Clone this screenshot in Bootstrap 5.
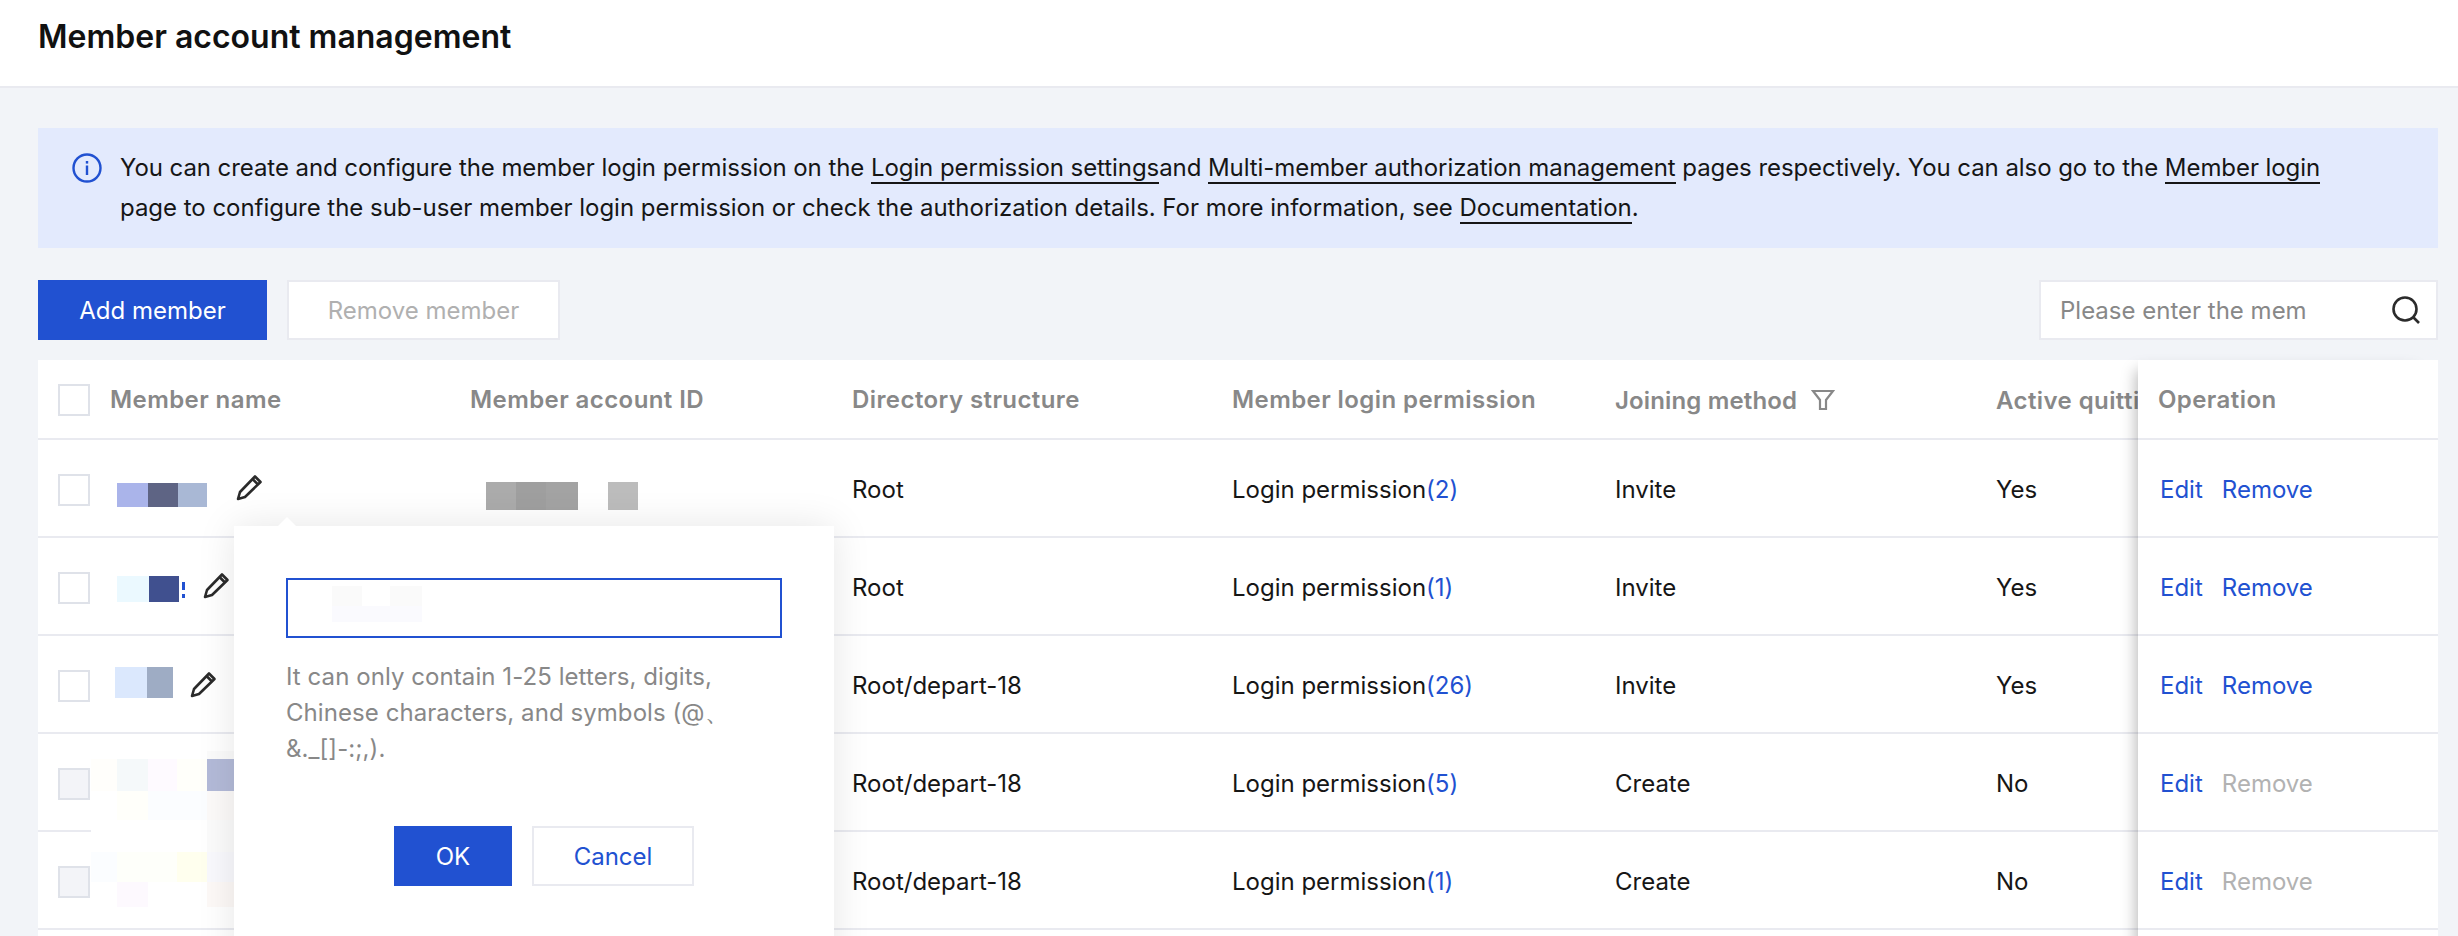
<!DOCTYPE html>
<html lang="en"><head><meta charset="utf-8"><title>Member account management</title>
<link href="https://cdn.jsdelivr.net/npm/bootstrap@5.3.0/dist/css/bootstrap.min.css" rel="stylesheet">
<style>
:root{--blue:#2151d1;--line:#e9eaf0;--grey:#888}
html,body{height:936px;overflow:hidden}
body{background:#f2f4f8;font-family:Inter,"Liberation Sans",sans-serif;font-size:24px;color:#161616}
.shell{position:relative;height:936px;overflow:hidden}
.topbar{height:88px;background:#fff;border-bottom:2px solid var(--line);padding:0 38px}
.topbar h1{font-size:32px;font-weight:600;margin:0;line-height:74px;color:#111}
.body-wrap{padding:40px 20px 0 38px}
.notice{background:#e3eafd;height:120px;padding:20px 34px;display:flex;gap:18px;line-height:40px;white-space:nowrap}
.notice svg{flex:none;width:30px;height:30px;margin-top:5px}
.notice a{color:inherit;text-decoration:none;border-bottom:2px solid #161616}
.line-a{letter-spacing:-.07px}.line-b{letter-spacing:-.03px}
.tools{height:60px;margin:32px 0 20px}
.btn-gap{gap:20px}
.sq-btn{border-radius:0;font-size:24px;height:60px;padding:2px 0 0;display:inline-flex;align-items:center;justify-content:center}
.sq-blue{background:var(--blue);border:0;color:#fff}
.sq-blue:hover{background:var(--blue);color:#fff}
.sq-off,.sq-off:disabled{background:#fff;border:2px solid var(--line);color:#b0b0b0;opacity:1}
.w-add{width:229px}.w-rm{width:273px}
.seek{width:399px;height:60px;background:#fff;border:2px solid var(--line);padding:0 15px 0 19px}
.seek input{width:246px;flex:none;border:0;padding:2px 0 0;outline:0;font:inherit;color:#161616;background:none}
.seek input::placeholder{color:var(--grey);opacity:1}
.seek svg{width:30px;height:30px}
.grid-wrap{background:#fff;display:flex}
.scroll-part{width:2100px;flex:none;overflow:hidden}
.fix-part{flex:1;position:relative;background:#fff;box-shadow:-12px 0 14px -10px rgba(0,0,0,.28)}
.mtb{table-layout:fixed;margin:0;--bs-table-bg:#fff;--bs-table-color:#161616;--bs-table-border-color:var(--line);border-collapse:separate;border-spacing:0}
.mtb.wide{width:2338px}
.mtb.slim{width:100%}
.mtb th,.mtb td{padding:0 20px;border-bottom:2px solid var(--line);vertical-align:middle;white-space:nowrap;overflow:hidden;box-shadow:none}
.mtb tr.th-row th{height:80px;font-weight:600;color:var(--grey);letter-spacing:.42px;padding-top:1px}
.mtb td{height:98px;padding-top:3px}
.c0{width:52px}.c1{width:360px}.c2{width:382px}.c3{width:380px}.c4{width:383px}.c5{width:381px}.c6{width:420px}
.mtb th.c0{padding:0 0 0 20px}
.mtb td.c0{padding:3px 0 0 20px}
.tick{width:32px;height:32px;border-radius:0!important;margin:0;border:2px solid #dfe2e9;display:block;background-color:#fff}
.tick:disabled{background-color:#f3f4f8;opacity:1}
.lnk{color:var(--blue);text-decoration:none}
.lnk-off{color:#b2b2b2}
.gap-op{margin-left:19px}
.mtb td.op-cell{padding-left:22px}
.name-cell{display:flex;align-items:center;height:90px}
.blur{display:flex;margin-left:7px;flex:none}
.blur i{display:block;height:100%}
.b1{height:24px;margin-top:10px}.b2{height:26px;margin-top:2px}.b3{height:31px;margin-top:-7px;margin-left:5px}
.b1 i:nth-child(1){width:31px;background:#aab4ea}.b1 i:nth-child(2){width:30px;background:#5e6484}.b1 i:nth-child(3){width:29px;background:#a9b8d5}
.b2 i:nth-child(1){width:32px;background:#ebf9ff}.b2 i:nth-child(2){width:30px;background:#40508f}
.b2 b{display:block;width:3px;height:16px;margin:6px 3px 0 3px;background:linear-gradient(var(--blue) 50%,transparent 50% 78%,var(--blue) 78%)}
.b3 i:nth-child(1){width:32px;background:#dbe8fd}.b3 i:nth-child(2){width:26px;background:#9eacc4}
.pen{width:27px;height:28px;flex:none;color:#2b2b2b}
.pen1{margin-left:29px;margin-top:-5px}.pen2{margin-left:15px;margin-top:-5px}.pen3{margin-left:17px;margin-top:-4px}
.id-blur{display:flex;height:28px;margin:12px 0 0 16px}
.id-blur i{display:block;width:30px}
.ib1{background:#ababab}.ib2{background:#9f9f9f}.ib3{background:#a3a3a3;width:32px!important}.ib4{background:#fff;}.ib5{background:#bcbcbc}
.smear{position:absolute;left:91px;top:751px;width:148px;height:156px;background:#fff;display:grid;grid-template-columns:26px 31px 29px 30px 32px;grid-template-rows:8px 32px 29px 32px 30px 25px;z-index:2}
.smear i:nth-child(n){display:block}
.s-a{background:#fffefb}.s-b{background:#f5f9fa}.s-c{background:#fefaff}.s-d{background:#fffffa}.s-e{background:#b3bad8}
.s-f{background:#fffffa}.s-g{background:#fbfdff}.s-h{background:#fcfaf9}.s-i{background:#fbfbfb}.s-j{background:#f9f9fd}.s-k{background:#fefffa}.s-l{background:#ffffee}.s-m{background:#fdf9fe}.s-n{background:#fdf9f7}
.pop-box{position:absolute;left:234px;top:526px;width:600px;height:500px;background:#fff;padding:52px;z-index:3;box-shadow:0 0 36px rgba(0,0,0,.1)}
.pop-box::before{content:"";position:absolute;left:44px;top:-9px;border:9px solid transparent;border-top:0;border-bottom-color:#fff}
.pop-field{position:relative;height:60px}
.pop-field .form-control{height:60px;border-radius:0;border:2px solid var(--blue);box-shadow:none}
.pop-shade{position:absolute;left:46px;top:8px;display:grid;grid-template-columns:30px 28px 32px;grid-template-rows:20px 16px}
.p-a{background:#fafafa}.p-b{background:#fff}.p-c{background:#fafafe}
.pop-tip{color:var(--grey);line-height:36px;margin:21px 0 59px;white-space:nowrap;letter-spacing:.07px}
.pop-acts{display:flex;justify-content:flex-end;gap:20px;margin-right:88px}
.w-ok{width:118px}.w-cancel{width:162px}
.sq-line{background:#fff;border:2px solid var(--line);color:var(--blue)}
.funnel{width:24px;height:24px;margin-left:14px;vertical-align:-3px}
.th-low{position:relative;top:1px;display:inline-block}
.mtb tr.th-row th .tight{letter-spacing:.15px}
</style></head><body>
<div class="shell">
<header class="topbar"><h1>Member account management</h1></header>
<main class="body-wrap">
<div class="notice">
<svg viewBox="0 0 30 30" fill="none"><circle cx="15" cy="15" r="13.5" stroke="#2151d1" stroke-width="2.4"/><rect x="13.8" y="12.5" width="2.4" height="9.5" fill="#2151d1"/><rect x="13.8" y="8" width="2.4" height="2.6" fill="#2151d1"/></svg>
<div><span class="line-a">You can create and configure the member login permission on the <a href="#">Login permission settings</a>and <a href="#">Multi-member authorization management</a> pages respectively. You can also go to the <a href="#">Member login</a></span><br><span class="line-b">page to configure the sub-user member login permission or check the authorization details. For more information, see <a href="#">Documentation</a>.</span></div>
</div>
<div class="tools d-flex align-items-center justify-content-between">
<div class="d-flex btn-gap"><button class="btn sq-btn sq-blue w-add">Add member</button><button class="btn sq-btn sq-off w-rm" disabled>Remove member</button></div>
<div class="seek d-flex align-items-center justify-content-between"><input type="text" placeholder="Please enter the member name">
<svg viewBox="0 0 30 30" fill="none" stroke="#2b2b2b" stroke-width="2.6"><circle cx="14" cy="14" r="11.5"/><path d="M22 22l6 6"/></svg></div>
</div>
<div class="grid-wrap">
<div class="scroll-part">
<table class="table mtb wide">
<colgroup><col class="c0"><col class="c1"><col class="c2"><col class="c3"><col class="c4"><col class="c5"><col class="c6"></colgroup>
<thead><tr class="th-row"><th class="c0"><input class="form-check-input tick" type="checkbox" aria-label="all"></th><th>Member name</th><th>Member account ID</th><th>Directory structure</th><th>Member login permission</th><th><span class="th-low tight">Joining method<svg class="funnel" viewBox="0 0 24 24" fill="none" stroke="#888" stroke-width="2.2"><path d="M2 3h20l-7 9v9H9v-9z"/></svg></span></th><th><span class="th-low">Active quitting</span></th></tr></thead>
<tbody>
<tr><td class="c0"><input class="form-check-input tick" type="checkbox" aria-label="row 1"></td>
<td><div class="name-cell"><div class="blur b1"><i></i><i></i><i></i></div><svg class="pen pen1" viewBox="0 0 27 28" fill="none" stroke="currentColor" stroke-width="2.6" stroke-linejoin="round"><path d="M2 26l2-7L19 3.5l5.5 5.5L9 24z"/><path d="M16.5 6l5.5 5.5"/></svg></div></td>
<td><div class="id-blur"><i class="ib1"></i><i class="ib2"></i><i class="ib3"></i><i class="ib4"></i><i class="ib5"></i></div></td>
<td>Root</td><td>Login permission<a class="lnk" href="#">(2)</a></td><td>Invite</td><td>Yes</td></tr>
<tr><td class="c0"><input class="form-check-input tick" type="checkbox" aria-label="row 2"></td>
<td><div class="name-cell"><div class="blur b2"><i></i><i></i><b></b></div><svg class="pen pen2" viewBox="0 0 27 28" fill="none" stroke="currentColor" stroke-width="2.6" stroke-linejoin="round"><path d="M2 26l2-7L19 3.5l5.5 5.5L9 24z"/><path d="M16.5 6l5.5 5.5"/></svg></div></td>
<td></td><td>Root</td><td>Login permission<a class="lnk" href="#">(1)</a></td><td>Invite</td><td>Yes</td></tr>
<tr><td class="c0"><input class="form-check-input tick" type="checkbox" aria-label="row 3"></td>
<td><div class="name-cell"><div class="blur b3"><i></i><i></i></div><svg class="pen pen3" viewBox="0 0 27 28" fill="none" stroke="currentColor" stroke-width="2.6" stroke-linejoin="round"><path d="M2 26l2-7L19 3.5l5.5 5.5L9 24z"/><path d="M16.5 6l5.5 5.5"/></svg></div></td>
<td></td><td>Root/depart-18</td><td>Login permission<a class="lnk" href="#">(26)</a></td><td>Invite</td><td>Yes</td></tr>
<tr><td class="c0"><input class="form-check-input tick" type="checkbox" disabled aria-label="row 4"></td><td></td><td></td><td>Root/depart-18</td><td>Login permission<a class="lnk" href="#">(5)</a></td><td>Create</td><td>No</td></tr>
<tr><td class="c0"><input class="form-check-input tick" type="checkbox" disabled aria-label="row 5"></td><td></td><td></td><td>Root/depart-18</td><td>Login permission<a class="lnk" href="#">(1)</a></td><td>Create</td><td>No</td></tr>
<tr><td class="c0"></td><td></td><td></td><td></td><td></td><td></td><td></td></tr>
</tbody></table>
</div>
<div class="fix-part">
<table class="table mtb slim">
<thead><tr class="th-row"><th>Operation</th></tr></thead>
<tbody>
<tr><td class="op-cell"><a class="lnk" href="#">Edit</a><a class="lnk gap-op" href="#">Remove</a></td></tr>
<tr><td class="op-cell"><a class="lnk" href="#">Edit</a><a class="lnk gap-op" href="#">Remove</a></td></tr>
<tr><td class="op-cell"><a class="lnk" href="#">Edit</a><a class="lnk gap-op" href="#">Remove</a></td></tr>
<tr><td class="op-cell"><a class="lnk" href="#">Edit</a><span class="lnk-off gap-op">Remove</span></td></tr>
<tr><td class="op-cell"><a class="lnk" href="#">Edit</a><span class="lnk-off gap-op">Remove</span></td></tr>
<tr><td></td></tr>
</tbody></table>
</div>
</div>
</main>
<div class="smear">
<i></i><i></i><i></i><i></i><i class="s-i"></i>
<i class="s-a"></i><i class="s-b"></i><i class="s-c"></i><i class="s-d"></i><i class="s-e"></i>
<i></i><i class="s-f"></i><i class="s-g"></i><i class="s-g"></i><i class="s-h"></i>
<i></i><i></i><i></i><i></i><i class="s-i"></i>
<i class="s-g"></i><i class="s-k"></i><i class="s-k"></i><i class="s-l"></i><i class="s-j"></i>
<i></i><i class="s-m"></i><i></i><i></i><i class="s-n"></i>
</div>
<aside class="pop-box">
<div class="pop-field"><input class="form-control" type="text" aria-label="Member name">
<div class="pop-shade"><i class="p-a"></i><i class="p-b"></i><i class="p-a"></i><i class="p-c"></i><i class="p-c"></i><i class="p-c"></i></div></div>
<p class="pop-tip">It can only contain 1-25 letters, digits,<br>Chinese characters, and symbols (@、<br>&amp;._[]-:;,).</p>
<div class="pop-acts"><button class="btn sq-btn sq-blue w-ok">OK</button><button class="btn sq-btn sq-line w-cancel">Cancel</button></div>
</aside>
</div>
<script src="https://cdn.jsdelivr.net/npm/bootstrap@5.3.0/dist/js/bootstrap.bundle.min.js"></script>
</body></html>
